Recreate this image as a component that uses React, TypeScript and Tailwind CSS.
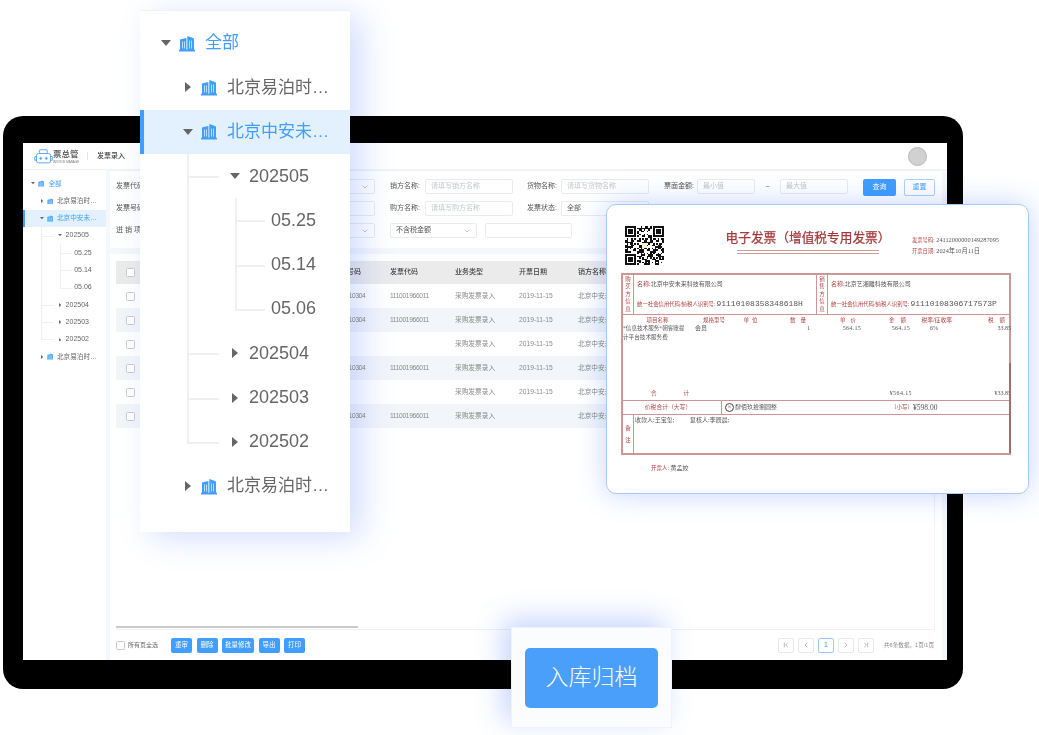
import React from "react";
import { ChevronDown, ChevronFirst, ChevronLast, ChevronLeft, ChevronRight } from "lucide-react";

const BLUE = "#409eff";

function Building() {
  return (
    <svg viewBox="0 0 16 16" className="w-[16px] h-[17px] shrink-0">
      <path fill={BLUE} d="M1 14.4V4.6Q1 3.9 1.8 3.7L7.4 2.6V14.4ZM8.3 14.4V0.6L14 2.4Q15 2.7 15 3.6V14.4Z" />
      <rect x="0" y="14.2" width="16" height="1.8" fill={BLUE} />
      <g fill="#fff">
        <rect x="3.2" y="6" width="0.65" height="7" />
        <rect x="5.1" y="6" width="0.65" height="7" />
        <rect x="10.1" y="5" width="0.65" height="8" />
        <rect x="12.2" y="5" width="0.65" height="8" />
      </g>
    </svg>
  );
}

function Caret({ open }: { open: boolean }) {
  return open ? (
    <svg viewBox="0 0 10 6" className="w-[10px] h-[6px] shrink-0">
      <path d="M0 0H10L5 6Z" fill="#666" />
    </svg>
  ) : (
    <svg viewBox="0 0 6 10" className="w-[6px] h-[10px] shrink-0 ml-[2px] mr-[2px]">
      <path d="M0 0V10L6 5Z" fill="#666" />
    </svg>
  );
}

type Row = {
  label: string;
  kind: "root" | "company" | "month" | "leaf";
  open?: boolean;
  active?: boolean;
  outer?: "full" | "half";
  inner?: "full" | "half";
};

const ROWS: Row[] = [
  { label: "全部", kind: "root", open: true },
  { label: "北京易泊时代科技有限公司", kind: "company" },
  { label: "北京中安未来科技有限公司", kind: "company", open: true, active: true },
  { label: "202505", kind: "month", open: true, outer: "full" },
  { label: "05.25", kind: "leaf", outer: "full", inner: "full" },
  { label: "05.14", kind: "leaf", outer: "full", inner: "full" },
  { label: "05.06", kind: "leaf", outer: "full", inner: "half" },
  { label: "202504", kind: "month", outer: "full" },
  { label: "202503", kind: "month", outer: "full" },
  { label: "202502", kind: "month", outer: "half" },
  { label: "北京易泊时代科技有限公司", kind: "company" },
];

function TreeRow({ r }: { r: Row }) {
  const pad =
    r.kind === "root"
      ? "pl-[21px]"
      : r.kind === "company"
        ? "pl-[43px]"
        : r.kind === "month"
          ? "pl-[90px]"
          : "pl-[131px]";
  return (
    <div className={`relative h-[44.3px] flex items-center text-[18px] ${pad} ${r.active ? "bg-[#e3f0fd]" : ""}`}>
      {r.active && <span className="absolute left-0 top-0 bottom-0 w-[4px] bg-[#409eff]" />}
      {r.outer && <span className={`absolute left-[47px] top-0 w-[2px] bg-[#eef0f3] ${r.outer === "full" ? "h-full" : "h-1/2"}`} />}
      {r.kind === "month" && <span className="absolute left-[47px] top-1/2 w-[32px] h-[2px] bg-[#eef0f3]" />}
      {r.inner && <span className={`absolute left-[95px] top-0 w-[2px] bg-[#eef0f3] ${r.inner === "full" ? "h-full" : "h-1/2"}`} />}
      {r.kind === "leaf" && <span className="absolute left-[95px] top-1/2 w-[30px] h-[2px] bg-[#eef0f3]" />}
      {r.kind !== "leaf" && <Caret open={!!r.open} />}
      {(r.kind === "root" || r.kind === "company") && (
        <span className="ml-[8px] mr-[10px]">
          <Building />
        </span>
      )}
      {r.kind === "month" && <span className="w-[9px]" />}
      <span
        className={`truncate ${r.kind === "company" ? "w-[103px] text-[17px]" : ""} ${r.kind === "root" ? "text-[17px]" : ""} ${
          r.kind === "root" || r.active ? "text-[#409eff]" : "text-[#666]"
        }`}
      >
        {r.label}
      </span>
    </div>
  );
}

function Tree() {
  return (
    <div>
      {ROWS.map((r, i) => (
        <TreeRow key={i} r={r} />
      ))}
    </div>
  );
}

function Label({ w, children }: { w: string; children: React.ReactNode }) {
  return <span className={`${w} h-[15px] flex items-center shrink-0 text-[7px] text-[#555] whitespace-nowrap`}>{children}</span>;
}

function Input({ w, ph, value, select }: { w: string; ph?: string; value?: string; select?: boolean }) {
  return (
    <span className={`${w} shrink-0 h-[15px] border border-[#e8ebf0] rounded-[2px] bg-white flex items-center justify-between px-[5px] text-[7px]`}>
      <span className={value ? "text-[#555]" : "text-[#c4c7cc]"}>{value || ph}</span>
      {select && <ChevronDown size={8} className="text-[#aaa] shrink-0" />}
    </span>
  );
}

function Filter() {
  return (
    <div className="bg-white h-[78px] pt-[8px] pl-[6px] flex flex-col gap-[7px] border-t border-[#f0f2f5]">
      <div className="flex items-start h-[15px]">
        <Label w="w-[31px]">发票代码:</Label>
        <Input w="w-[228px]" select />
        <span className="w-[15px]" />
        <Label w="w-[35px]">销方名称:</Label>
        <Input w="w-[88px]" ph="请填写销方名称" />
        <span className="w-[14px]" />
        <Label w="w-[34px]">货物名称:</Label>
        <Input w="w-[88px]" ph="请填写货物名称" />
        <span className="w-[15px]" />
        <Label w="w-[33px]">票面金额:</Label>
        <Input w="w-[58px]" ph="最小值" />
        <span className="w-[25px] h-[15px] leading-[15px] text-center text-[7px] text-[#555]">~</span>
        <Input w="w-[68px]" ph="最大值" />
        <span className="w-[15px]" />
        <span className="w-[33px] h-[17px] shrink-0 rounded-[2px] bg-[#409eff] text-white text-[7px] flex items-center justify-center">查询</span>
        <span className="w-[8px]" />
        <span className="w-[31px] h-[17px] shrink-0 rounded-[2px] border border-[#a9d3ff] bg-white text-[#409eff] text-[7px] flex items-center justify-center">重置</span>
      </div>
      <div className="flex items-start h-[15px]">
        <Label w="w-[31px]">发票号码:</Label>
        <Input w="w-[228px]" />
        <span className="w-[15px]" />
        <Label w="w-[35px]">购方名称:</Label>
        <Input w="w-[88px]" ph="请填写购方名称" />
        <span className="w-[14px]" />
        <Label w="w-[34px]">发票状态:</Label>
        <Input w="w-[88px]" value="全部" />
      </div>
      <div className="flex items-start h-[15px]">
        <Label w="w-[31px]">进 销 项:</Label>
        <Input w="w-[228px]" select />
        <span className="w-[15px]" />
        <Input w="w-[87px]" value="不含税金额" select />
        <span className="w-[8px]" />
        <Input w="w-[87px]" />
      </div>
    </div>
  );
}

function Check() {
  return <span className="block w-[9px] h-[9px] rounded-[1.5px] border border-[#c8cacd] bg-white" />;
}

const DATA = [
  { no: "0110010304", code: "111001966011", date: "2019-11-15" },
  { no: "0110010304", code: "111001966011", date: "2019-11-15" },
  { no: "", code: "", date: "2019-11-15" },
  { no: "0110010304", code: "111001966011", date: "2019-11-15" },
  { no: "", code: "", date: "2019-11-15" },
  { no: "0110010304", code: "111001966011", date: "" },
];

function DataTable() {
  const cols = "grid grid-cols-[28px_189px_57px_65px_64px_59px_1fr] items-center";
  return (
    <div className="relative bg-white h-[376px] ml-[6px] mr-[7px] mt-0 pt-[7px] border-r border-b border-[#eef1f6] overflow-hidden">
      <div className={`${cols} h-[23px] bg-[#ebebeb] text-[7px] text-[#444] font-medium`}>
        <span className="flex justify-center"><Check /></span>
        <span />
        <span>发票号码</span>
        <span>发票代码</span>
        <span>业务类型</span>
        <span>开票日期</span>
        <span>销方名称</span>
      </div>
      {DATA.map((d, i) => (
        <div key={i} className={`${cols} h-[24px] text-[6.7px] text-[#8a8a8a] ${i % 2 === 1 ? "bg-[#f2f5f9]" : "bg-white"}`}>
          <span className="flex justify-center"><Check /></span>
          <span />
          <span className="tracking-[-0.45px]">{d.no}</span>
          <span className="tracking-[-0.35px]">{d.code}</span>
          <span>采购发票录入</span>
          <span>{d.date}</span>
          <span className="whitespace-nowrap">北京中安未来</span>
        </div>
      ))}
      <div className="absolute left-0 bottom-[1px] w-[242px] h-[2px] bg-[#c9c9c9]" />
    </div>
  );
}

function ActionBtn({ w, children }: { w: string; children: React.ReactNode }) {
  return <span className={`${w} h-[15px] rounded-[2px] bg-[#409eff] text-white text-[6.5px] flex items-center justify-center`}>{children}</span>;
}

function PageBtn({ children, active }: { children: React.ReactNode; active?: boolean }) {
  return (
    <span className={`w-[16px] h-[15px] rounded-[2px] border flex items-center justify-center text-[7px] ${active ? "border-[#9cc9ff] text-[#409eff]" : "border-[#e6e8eb] text-[#999]"}`}>
      {children}
    </span>
  );
}

function Footer() {
  return (
    <div className="bg-white flex-1 flex items-center pl-[6px] pr-[7px]">
      <Check />
      <span className="ml-[3px] text-[6px] text-[#666] whitespace-nowrap">所有页全选</span>
      <div className="ml-[13px] flex gap-[4.5px]">
        <ActionBtn w="w-[21px]">重审</ActionBtn>
        <ActionBtn w="w-[21px]">删除</ActionBtn>
        <ActionBtn w="w-[32px]">批量修改</ActionBtn>
        <ActionBtn w="w-[21px]">导出</ActionBtn>
        <ActionBtn w="w-[21px]">打印</ActionBtn>
      </div>
      <div className="ml-auto flex items-center gap-[4px]">
        <PageBtn><ChevronFirst size={8} /></PageBtn>
        <PageBtn><ChevronLeft size={8} /></PageBtn>
        <PageBtn active>1</PageBtn>
        <PageBtn><ChevronRight size={8} /></PageBtn>
        <PageBtn><ChevronLast size={8} /></PageBtn>
        <span className="ml-[6px] w-[51px] text-[5.6px] text-[#888] whitespace-nowrap">共6条数据，1页/1页</span>
      </div>
    </div>
  );
}

function Logo() {
  return (
    <svg viewBox="0 0 20 16" className="w-[19px] h-[15px] shrink-0" fill="none" stroke="#5aa5f5" strokeWidth="1">
      <rect x="5.5" y="0.8" width="8.5" height="4" rx="1" />
      <rect x="2.5" y="4.8" width="15" height="10" rx="2" />
      <path d="M2.5 8H0.7V12H2.5M17.5 8H19.3V12H17.5" />
      <circle cx="7" cy="10" r="1" fill="#5aa5f5" />
      <circle cx="13" cy="10" r="1" fill="#5aa5f5" />
    </svg>
  );
}

function Header() {
  return (
    <div className="h-[27px] shrink-0 flex items-center pl-[11px] pr-[20px] bg-white border-b border-[#f0f2f5]">
      <Logo />
      <div className="flex flex-col leading-none w-[34px] pt-[2px]">
        <span className="text-[8.5px] font-bold text-[#666]">票总管</span>
        <span className="text-[3px] text-[#777] mt-[2px] whitespace-nowrap">INVOICE MANAGE</span>
      </div>
      <span className="w-px h-[8px] bg-[#e5e5e5]" />
      <span className="ml-[9px] text-[7px] font-medium text-[#444]">发票录入</span>
      <span className="ml-auto w-[19px] h-[19px] rounded-full bg-[#d1d1d1] border border-[#b8b8b8]" />
    </div>
  );
}

function Monitor() {
  return (
    <div className="absolute left-[3px] top-[116px] w-[960px] h-[573px] bg-black rounded-[20px] pt-[27px] pl-[20px] pr-[16px] pb-[29px]">
      <div className="w-[924px] h-[517px] bg-[#f4f7fb] flex flex-col overflow-hidden">
        <Header />
        <div className="flex-1 flex min-h-0">
          <div className="w-[83px] shrink-0 bg-white pt-[5px] overflow-hidden">
            <div className="[zoom:0.391] w-[212px]">
              <Tree />
            </div>
          </div>
          <div className="ml-[4px] w-[832px] flex flex-col">
            <Filter />
            <div className="h-[6px] shrink-0" />
            <div className="bg-white flex-1 flex flex-col">
              <DataTable />
              <Footer />
            </div>
          </div>
        </div>
      </div>
    </div>
  );
}

function TreePopup() {
  return (
    <div className="absolute left-[140px] top-[10px] w-[210px] h-[522px]">
      <div className="absolute inset-0 bg-white mix-blend-multiply shadow-[12px_6px_30px_rgba(70,120,255,0.24)]" />
      <div className="relative h-full bg-white border-t border-[#eef1f6] pt-[10px]">
        <Tree />
      </div>
    </div>
  );
}

function Qr() {
  const n = 25;
  const cells: React.ReactNode[] = [];
  for (let y = 0; y < n; y++) {
    for (let x = 0; x < n; x++) {
      if ((x < 8 && y < 8) || (x >= n - 8 && y < 8) || (x < 8 && y >= n - 8)) continue;
      if (x >= 11 && x <= 13 && y >= 11 && y <= 13) continue;
      const h = (x * 7919 + y * 104729 + x * y * 31) % 97;
      if (h % 2 === 0) cells.push(<rect key={`${x}-${y}`} x={x} y={y} width="1" height="1" fill="#111" />);
    }
  }
  const F = ({ x, y }: { x: number; y: number }) => (
    <g>
      <rect x={x} y={y} width="7" height="7" fill="#111" />
      <rect x={x + 1} y={y + 1} width="5" height="5" fill="#fff" />
      <rect x={x + 2} y={y + 2} width="3" height="3" fill="#111" />
    </g>
  );
  return (
    <svg viewBox="0 0 25 25" className="w-[39px] h-[39px] shrink-0" shapeRendering="crispEdges">
      {cells}
      <F x={0} y={0} />
      <F x={18} y={0} />
      <F x={0} y={18} />
      <rect x="11" y="11" width="3" height="3" fill="#f4efc8" />
    </svg>
  );
}

function PartyVertical({ text }: { text: string }) {
  return (
    <div className="w-[11px] shrink-0 flex flex-col items-center justify-center text-[5.5px] leading-[7.5px] text-[#b04444] border-r-[1.5px] border-[#cf9595]">
      {text.split("").map((c, i) => (
        <span key={i}>{c}</span>
      ))}
    </div>
  );
}

function Party({ side, name, id, bordered }: { side: string; name: string; id: string; bordered?: boolean }) {
  return (
    <div className={`flex ${bordered ? "w-[194px] border-r-[1.5px] border-[#cf9595]" : "flex-1"}`}>
      <PartyVertical text={side} />
      <div className="flex-1 pl-[3px] flex flex-col">
        <div className="h-[19px] flex items-center text-[6px] text-[#555] whitespace-nowrap">
          <span className="text-[#b04444]">名称:</span>
          {name}
        </div>
        <div className="h-[20px] flex items-center text-[#555] whitespace-nowrap">
          <span className="text-[5.4px] text-[#b04444]">统一社会信用代码/纳税人识别号:</span>
          <span className="ml-[1px] text-[8px] font-['Liberation_Mono','DejaVu_Sans_Mono',monospace]">{id}</span>
        </div>
      </div>
    </div>
  );
}

function Invoice() {
  const itemCols = "grid grid-cols-[69px_44px_32px_45px_58px_45px_40px_55px]";
  return (
    <div className="absolute left-[606px] top-[204px] w-[423px] h-[290px]">
      <div className="absolute inset-0 rounded-[10px] bg-white mix-blend-multiply shadow-[0_0_28px_rgba(70,120,255,0.32)]" />
      <div className="relative h-full rounded-[10px] bg-white border border-[#a9c9fb] pl-[14px] pr-[17px] pt-[21px] font-['Liberation_Serif','Noto_Sans_CJK_SC',serif]">
        <div className="flex h-[47px]">
          <div className="ml-[4px] w-[39px]">
            <Qr />
          </div>
          <div className="ml-[61px] w-[166px] pt-[4px] flex flex-col items-center">
            <span className="text-[12.7px] leading-[17px] [-webkit-text-stroke:0.25px_#a33b3b] text-[#a33b3b] whitespace-nowrap">电子发票（增值税专用发票）</span>
            <span className="mt-[3px] w-[142px] h-[3.5px] border-y border-[#cf9a9a]" />
          </div>
          <div className="ml-[21px] pt-[11px] flex flex-col gap-[5px] text-[6.3px] leading-[6px] text-[#555] whitespace-nowrap">
            <span><span className="text-[5.3px] text-[#b04444]">发票号码:</span> 24112000000149287095</span>
            <span><span className="text-[5.3px] text-[#b04444]">开票日期:</span> 2024年10月11日</span>
          </div>
        </div>
        <div className="relative w-[390px] h-[182px] border-2 border-[#cf9595] flex flex-col">
          <span className="absolute -right-[2px] top-[88px] bottom-0 w-[2px] bg-[#a86a6a]" />
          <div className="flex h-[40px] border-b-[1.5px] border-[#cf9595] shrink-0">
            <Party side="购买方信息" name="北京中安未来科技有限公司" id="91110108358348618H" bordered />
            <Party side="销售方信息" name="北京艺湘雕科技有限公司" id="91110108306717573P" />
          </div>
          <div className="flex-1 flex flex-col pt-[2px]">
            <div className={`${itemCols} text-[5.5px] leading-[7px] text-[#b04444] text-center whitespace-nowrap`}>
              <span>项目名称</span>
              <span>规格型号</span>
              <span className="tracking-[3px]">单位</span>
              <span className="text-right pr-[2px] tracking-[5px]">数量</span>
              <span className="text-right pr-[10px] tracking-[5px]">单价</span>
              <span className="text-right pr-[4px] tracking-[6px]">金额</span>
              <span className="text-right pr-[4px] text-[5.8px]">税率/征收率</span>
              <span className="text-right tracking-[6px]">税额</span>
            </div>
            <div className={`${itemCols} text-[6px] leading-[9px] text-[#555] whitespace-nowrap`}>
              <span className="text-[5.6px]">*信息技术服务*朝客账提<br />计平台技术服务费</span>
              <span className="pl-[3px]">会员</span>
              <span />
              <span className="text-right pr-[3px]">1</span>
              <span className="text-right pr-[10px] tracking-[0.3px]">564.15</span>
              <span className="text-right pr-[6px] tracking-[0.3px]">564.15</span>
              <span className="text-right pr-[18px]">6%</span>
              <span className="text-right">33.85</span>
            </div>
            <div className={`${itemCols} mt-auto pb-[2px] text-[6px] text-[#555] whitespace-nowrap`}>
              <span className="col-span-2 text-[5.5px] text-[#b04444] pl-[28px] tracking-[27px]">合计</span>
              <span className="col-span-3" />
              <span className="text-right pr-[4px] tracking-[0.4px]">¥564.15</span>
              <span />
              <span className="text-right">¥33.85</span>
            </div>
          </div>
          <div className="h-[15px] shrink-0 border-y-[1.5px] border-[#cf9595] flex items-center whitespace-nowrap">
            <span className="w-[99px] h-full border-r-[1.5px] border-[#cf9595] flex items-center justify-center pr-[8px] text-[5.8px] text-[#b04444]">价税合计（大写）</span>
            <span className="ml-[3px] w-[9px] h-[9px] rounded-full border border-[#444] flex items-center justify-center text-[7px] leading-none text-[#444]">×</span>
            <span className="ml-[1px] text-[6px] text-[#555]">肆佰玖拾捌圆整</span>
            <span className="ml-[114px] text-[5.5px] text-[#b04444]">（小写）</span>
            <span className="text-[7.5px] text-[#555]">¥598.00</span>
          </div>
          <div className="h-[38px] shrink-0 flex">
            <div className="w-[11px] border-r-[1.5px] border-[#cf9595] flex flex-col items-center justify-center gap-[5px] text-[5.5px] leading-[7px] text-[#b04444]">
              <span>备</span>
              <span>注</span>
            </div>
            <div className="flex pl-[1px] pt-[2px] text-[6px] leading-[7px] text-[#555] whitespace-nowrap">
              <span className="w-[55px]">收款人:王宝玺;</span>
              <span>复核人:李辰晨;</span>
            </div>
          </div>
        </div>
        <div className="ml-[30px] mt-[9px] text-[6px] text-[#555]">
          <span className="text-[5.5px] text-[#b04444]">开票人:</span> 黄孟姣
        </div>
      </div>
    </div>
  );
}

function Archive() {
  return (
    <div className="absolute left-[511px] top-[627px] w-[161px] h-[101px]">
      <div className="absolute inset-0 bg-white mix-blend-multiply shadow-[-8px_-8px_26px_rgba(70,120,255,0.3)]" />
      <div className="relative h-full bg-[#fbfcfe] border border-[#f0f4fa] flex items-center justify-center">
        <button className="w-[133px] h-[60px] rounded-[5px] bg-[#4a9ffb] text-white text-[23px] font-light">入库归档</button>
      </div>
    </div>
  );
}

export default function App() {
  return (
    <div className="relative w-[1039px] h-[735px] bg-white overflow-hidden blur-[0.35px] font-['Liberation_Sans','Noto_Sans_CJK_SC',sans-serif]">
      <Monitor />
      <TreePopup />
      <Invoice />
      <Archive />
    </div>
  );
}
